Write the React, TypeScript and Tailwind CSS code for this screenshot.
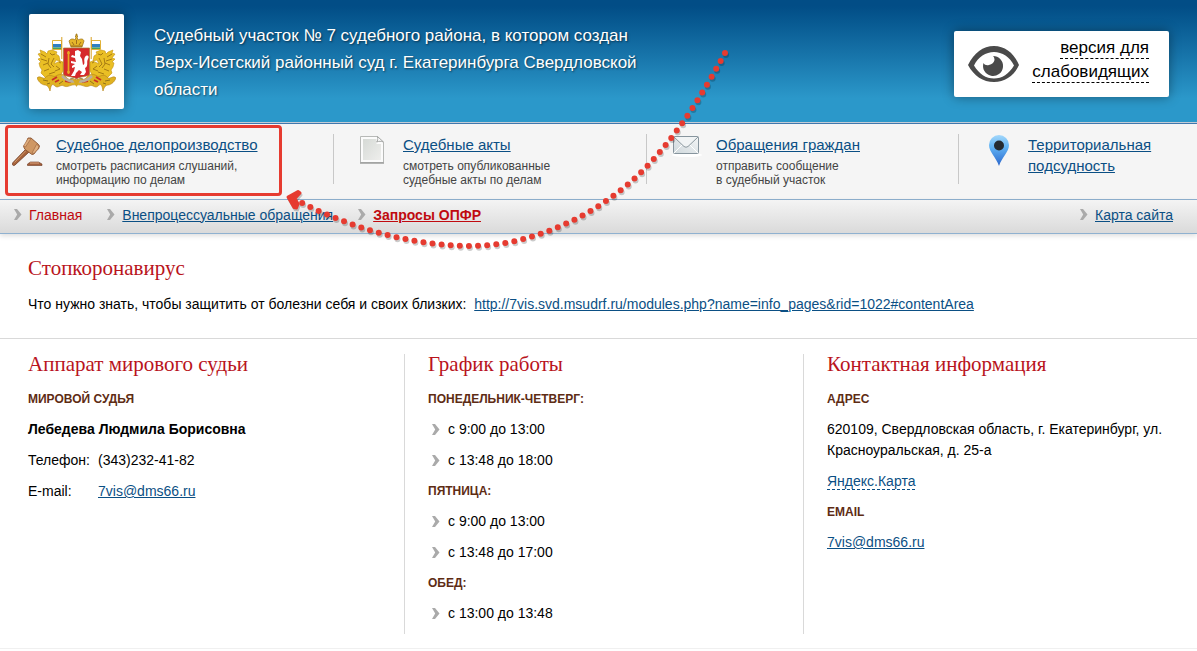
import React from "react";

const services = [
  {
    title: "Судебное делопроизводство",
    lines: ["смотреть расписания слушаний,", "информацию по делам"],
    icon: <GavelIcon />,
    cell: "pl-3",
  },
  {
    title: "Судебные акты",
    lines: ["смотреть опубликованные", "судебные акты по делам"],
    icon: <PaperIcon />,
    cell: "border-l border-[#c8c8c8] pl-[25px]",
  },
  {
    title: "Обращения граждан",
    lines: ["отправить сообщение", "в судебный участок"],
    icon: <MailIcon />,
    cell: "border-l border-[#c8c8c8] pl-[25px]",
  },
  {
    title: "Территориальная подсудность",
    lines: [],
    icon: <PinIcon />,
    cell: "border-l border-[#c8c8c8] pl-[25px]",
  },
];

const schedule = [
  { day: "Понедельник-четверг:", hours: ["с 9:00 до 13:00", "с 13:48 до 18:00"] },
  { day: "Пятница:", hours: ["с 9:00 до 13:00", "с 13:48 до 17:00"] },
  { day: "Обед:", hours: ["с 13:00 до 13:48"] },
];

function Chevron() {
  return (
    <svg className="shrink-0" width="8" height="12" viewBox="0 0 8 12" aria-hidden="true">
      <path d="M0 0h3l4.500 5.500L3 11H0l3.200-5.500z" fill="#aaa" />
    </svg>
  );
}

function GavelIcon() {
  return (
    <svg width="32" height="34" viewBox="0 -3 32 34" aria-hidden="true">
      <path d="M14 12l3 3L3 28c-2 1.500-3.500-.5-2-2.500z" fill="#a8643c" stroke="#6d3a22" strokeWidth=".8" />
      <path d="M14 13.500L2.500 25.500" stroke="#d09a6c" strokeWidth="1" />
      <path d="M16 1l3 0 7 6 1.500 2-1 3-2 1.500-2.500 3.500-2 .5-7-5-1.500-3 2.500-3z" fill="#cf9763" stroke="#8a5431" strokeWidth=".9" />
      <path d="M16 1.500l3 0-5.500 8.500-2-1zM24.500 7.500l2.500 1.500-1 3-4 4.500-2-.5z" fill="#dfae7e" stroke="#99603a" strokeWidth=".6" />
      <path d="M15.500 27l3-2h8l3.500 2v1.500H15.500z" fill="#a45f3b" stroke="#6d3a22" strokeWidth=".6" />
      <path d="M18 26h9" stroke="#dda982" />
    </svg>
  );
}

function PaperIcon() {
  return (
    <svg width="32" height="32" viewBox="3 0 32 32" aria-hidden="true">
      <defs>
        <linearGradient id="sheet" x1="0" y1="0" x2="1" y2="1">
          <stop offset="0" stopColor="#d6dad6" />
          <stop offset="1" stopColor="#eeeeec" />
        </linearGradient>
      </defs>
      <path d="M4.500 2.500h17l6 6V28.500h-23z" fill="#fbfbfb" stroke="#b7b9b7" />
      <path d="M7 5h13.500v5H25v16H7z" fill="url(#sheet)" />
      <path d="M21.500 2.500c.5 3 .3 4-.8 5.500 2-1 4.500-1 6.800 0z" fill="#fff" stroke="#a3a5a3" />
      <path d="M4 29h24" stroke="#9c9e9c" strokeWidth="1.500" />
    </svg>
  );
}

function MailIcon() {
  return (
    <svg width="32" height="24" viewBox="0 0 32 24" aria-hidden="true">
      <defs>
        <linearGradient id="mail" x1="0" y1="1" x2="1" y2="0">
          <stop offset="0" stopColor="#cfd8dc" />
          <stop offset="1" stopColor="#f4f6f7" />
        </linearGradient>
      </defs>
      <ellipse cx="15" cy="21" rx="15" ry="2" fill="#fff" />
      <rect x="1.500" y="2.500" width="25" height="17" rx="1" fill="url(#mail)" stroke="#87959e" />
      <path d="M2 19l8-8M26 19l-8-8" stroke="#fff" />
      <path d="M2 3l10 9.500q2 1.500 4 0L26 3" fill="#f1f4f5" stroke="#8b989f" />
    </svg>
  );
}

function PinIcon() {
  return (
    <svg width="32" height="34" viewBox="-1 -1 32 34" aria-hidden="true">
      <defs>
        <linearGradient id="pin" x1="0" y1="0" x2="0" y2="1">
          <stop offset="0" stopColor="#a4d8fb" />
          <stop offset=".4" stopColor="#5fb1f3" />
          <stop offset="1" stopColor="#2b66cc" />
        </linearGradient>
      </defs>
      <path d="M14 0a10 10 0 0 1 10 10c0 7-7 12-10 21C11 22 4 17 4 10A10 10 0 0 1 14 0z" fill="url(#pin)" />
      <circle cx="14" cy="10.500" r="5" fill="#242a30" />
    </svg>
  );
}

function EyeIcon() {
  return (
    <svg className="shrink-0" width="52" height="38" viewBox="0 0 52 38" aria-hidden="true">
      <path
        fillRule="evenodd"
        d="M0 20C6 8 15 1 26 1s20 7 25 19c-5 11-14 17-25 17S6 31 0 20zM6 20.500C11 29 18 33.500 26 33.500S41 29 46 20.500C42 12 34 7 26 7S10 12 6 20.500z"
        fill="#4a4a4a"
      />
      <path d="M25 11a10 10 0 1 1-9.500 7c1 2 3 2.500 5.500 2 3-.5 5-2.500 5.500-5 0-1.500-.5-3-1.500-4z" fill="#4a4a4a" />
    </svg>
  );
}

// One supporter with its flag, mirrored for the right side
function Griffin() {
  return (
    <g>
      <path d="M15.500 7.500h9v9h-9z" fill="#fff" stroke="#dca923" strokeWidth=".9" />
      <path d="M16 11h8v3.500h-8z" fill="#2f7fc4" />
      <path d="M16 14.500h8v1.500h-8z" fill="#4da257" />
      <path d="M24.800 4v22" stroke="#d8a020" strokeWidth="1" />
      <path
        d="M3 17l5 2 2 2 1-3 4-1 5 2-1 2 3 2 1 5-4-1-2 4 6-3 3 1v9l-3 5-6 3-8-1-5-5 1-3-2-3-1-4 2-1-3-3 3-1-3-4 3-1z"
        fill="#eabf25"
        stroke="#c4920f"
        strokeWidth=".6"
      />
      <path
        d="M4 21l5 3M4 26l6 2M6 32l5-2M13 20l2 2 3-1M12 25l-1 6 3 4M17 25l-3 6 3 3M7 38l5-2M19 33l4 3-5 2M12 41l6-2M22 29l2 1"
        stroke="#94690f"
        strokeWidth=".8"
        fill="none"
      />
      <path
        d="M0 45c3-3 5 1 8 0 5-6 8 0 11-2s7-3 10 1 7 2 10 2v6c-5-1-8 3-12 1s-6 3-9 0-4-1-5 5c-1-4-3-6-5-6s-6-2-8-7z"
        fill="#e0b221"
        stroke="#b3821a"
        strokeWidth=".6"
      />
      <path d="M15 47l5-3M18 49l4-2M28 48l6 1" stroke="#cb2f25" strokeWidth="1.900" />
      <path d="M6 47l5 1M22 51l4-3M33 46l4-1M10 51l3-1" stroke="#7d651b" strokeWidth=".8" />
    </g>
  );
}

function Emblem() {
  return (
    <svg width="79" height="58" viewBox="0 0 79 58" role="img" aria-label="Герб Свердловской области">
      <Griffin />
      <g transform="matrix(-1 0 0 1 79 0)">
        <Griffin />
      </g>
      <path d="M26.500 15h26v26c0 3-10 2-13 5-3-3-13-2-13-5z" fill="#d6292b" stroke="#a77b28" strokeWidth=".7" />
      <path d="M31.500 18v23M30 20h3M30 39h3" stroke="#e9a823" strokeWidth="1.700" />
      <path
        d="M38 18l3-1 3 2-1 4 2 3 1 6c3-1 0-5 2-8s5-1 3 2 1 7-3 9l1 4-2 3h-4l2-3-3-2-3 3-1 3h-4l3-5 1-4-3 1v-2l3-2-4-1v-2l5 1-1-4-4-1 1-2 3 1z"
        fill="#fff"
      />
      <path d="M34 14l-2-6c2-3 5-2 6-1l1-3-1-1h1V1h1v2h1l-1 1 1 3c2-1 5-2 6 1l-2 6z" fill="#e5b62b" stroke="#9a6d12" strokeWidth=".7" />
      <path d="M39.500 7v4M35 9l2 3M44 9l-2 3M34 13h11" stroke="#8b5c18" strokeWidth=".8" />
      <path d="M25 43q7 7 14.500 5Q48 50 55 43" fill="none" stroke="#baae9c" strokeWidth="2.500" />
      <path d="M36 47h7l-3.500 7z" fill="#d8a81f" />
    </svg>
  );
}

function SubTitle({ children }: { children: React.ReactNode }) {
  return <h3 className="mb-[9px] text-xs leading-[21px] font-bold text-[#5e2c14] uppercase">{children}</h3>;
}

function Title({ children }: { children: React.ReactNode }) {
  return <h2 className="font-['Liberation_Serif',serif] text-[21px] leading-5 text-[#b9141c]">{children}</h2>;
}

// Dotted pointer towards the first service
function Pointer() {
  const curve = "M725 53C701 97 672 144 635 178C593 217 530 246 471 246C412 246 352 228 302 203";
  const head = "M288 197L298 191.500L300 193L295 198.500L298 204L296.500 208L294 207.500z";
  return (
    <svg className="pointer-events-none absolute top-0 left-0" width="760" height="260" viewBox="0 0 760 260" fill="none" aria-hidden="true">
      <g transform="translate(1 2)" stroke="#00000033" strokeLinecap="round" strokeLinejoin="round">
        <path d={curve} strokeWidth="6" pathLength="56.020" strokeDasharray="0 1" />
        <path d={head} strokeWidth="3" />
      </g>
      <g stroke="#e63b30" strokeLinecap="round" strokeLinejoin="round">
        <path d={curve} strokeWidth="6" pathLength="56.020" strokeDasharray="0 1" />
        <path d={head} fill="#e63b30" strokeWidth="3" />
      </g>
    </svg>
  );
}

const link = "text-[#0b4f84] underline";

const App = () => {
  return (
    <div className="relative min-h-screen bg-white font-['Liberation_Sans',Arial,sans-serif] text-sm text-black">
      <header className="flex items-start justify-between border-b border-[#3f78ae] bg-linear-to-b from-[#024d86] from-5% to-[#2b98ca] to-80% pr-7 pb-3.5 pl-[29px] shadow-[inset_0_-1px_0_#c3ccd6]">
        <div className="flex items-start gap-[30px]">
          <a href="#" className="mt-3.5 flex size-[95px] items-center justify-center rounded-xs bg-white shadow-[0_0_12px_#0006]">
            <Emblem />
          </a>
          <h1 className="mt-[22px] w-[500px] text-[17px] leading-[27px] text-white [text-shadow:1px_1px_2px_#0008]">
            Судебный участок № 7 судебного района, в котором создан Верх-Исетский районный суд г. Екатеринбурга Свердловской области
          </h1>
        </div>
        <button className="mt-[31px] flex h-[66px] items-center gap-3 rounded-xs bg-white pr-5 pl-3.5 text-right text-[17px] shadow-[0_0_12px_#0006]">
          <EyeIcon />
          <span className="flex h-full flex-col items-end gap-[3px] pt-[7px] leading-5">
            <span className="border-b border-dashed border-black">версия для</span>
            <span className="border-b border-dashed border-black">слабовидящих</span>
          </span>
        </button>
      </header>

      <nav className="grid grid-cols-[333fr_313fr_312fr_239fr] border-b border-[#8fb1d0] bg-[#f5f5f5] pt-2.5 pb-[15px]">
        {services.map((s) => (
          <div key={s.title} className={`flex h-[50px] items-start gap-3 ${s.cell}`}>
            <div className="w-8 shrink-0">{s.icon}</div>
            <div>
              <a href="#" className={`block text-[15px] leading-[21px] ${link}`}>
                {s.title}
              </a>
              <p className="mt-1 text-xs leading-3.5 text-[#444]">
                {s.lines.map((line) => (
                  <span key={line} className="block">
                    {line}
                  </span>
                ))}
              </p>
            </div>
          </div>
        ))}
      </nav>

      <nav className="flex h-[34px] items-center border-b border-[#8fb1d0] bg-linear-to-b from-[#f4f4f4] to-[#dadada] pr-6 pb-1 pl-3.5 shadow-[0_2px_5px_#0002]">
        <a href="#" className="flex items-center gap-[7px] text-[#c00a0f]">
          <Chevron />
          Главная
        </a>
        <a href="#" className={`ml-[25px] flex items-center gap-[7px] ${link}`}>
          <Chevron />
          Внепроцессуальные обращения
        </a>
        <a href="#" className="ml-[25px] flex items-center gap-[7px] font-bold text-[#c00a0f] underline">
          <Chevron />
          Запросы ОПФР
        </a>
        <a href="#" className={`ml-auto flex items-center gap-[7px] ${link}`}>
          <Chevron />
          Карта сайта
        </a>
      </nav>

      <section className="border-b border-[#d9d9d9] px-7 pt-6 pb-[23px]">
        <Title>Стопкоронавирус</Title>
        <p className="mt-4 leading-[21px]">
          Что нужно знать, чтобы защитить от болезни себя и своих близких:&nbsp;{" "}
          <a href="#" className={link}>
            http://7vis.svd.msudrf.ru/modules.php?name=info_pages&amp;rid=1022#contentArea
          </a>
        </p>
      </section>

      <main className="grid grid-cols-[404fr_399fr_394fr] border-b border-[#f0f0f0] pt-[15px] pb-3.5 leading-[21px]">
        <section className="pl-7">
          <Title>Аппарат мирового судьи</Title>
          <div className="mt-[15px]">
            <SubTitle>Мировой судья</SubTitle>
            <p className="mb-2.5 font-bold">Лебедева Людмила Борисовна</p>
            <dl className="grid grid-cols-[70px_1fr] gap-y-2.5">
              <dt>Телефон:</dt>
              <dd>(343)232-41-82</dd>
              <dt>E-mail:</dt>
              <dd>
                <a href="#" className={link}>
                  7vis@dms66.ru
                </a>
              </dd>
            </dl>
          </div>
        </section>

        <section className="border-l border-[#d9d9d9] pl-[23px]">
          <Title>График работы</Title>
          <div className="mt-[15px]">
            {schedule.map((s) => (
              <div key={s.day}>
                <SubTitle>{s.day}</SubTitle>
                <ul className="pl-1">
                  {s.hours.map((h) => (
                    <li key={h} className="mb-2.5 flex items-center gap-2">
                      <Chevron />
                      {h}
                    </li>
                  ))}
                </ul>
              </div>
            ))}
          </div>
        </section>

        <section className="border-l border-[#d9d9d9] pr-7 pl-[23px]">
          <Title>Контактная информация</Title>
          <div className="mt-[15px]">
            <SubTitle>Адрес</SubTitle>
            <p className="mb-2.5">620109, Свердловская область, г. Екатеринбург, ул. Красноуральская, д. 25-а</p>
            <p className="mb-2.5">
              <a href="#" className="border-b border-dashed border-[#0b4f84] text-[#0b4f84]">
                Яндекс.Карта
              </a>
            </p>
            <SubTitle>Email</SubTitle>
            <a href="#" className={link}>
              7vis@dms66.ru
            </a>
          </div>
        </section>
      </main>

      <div className="pointer-events-none absolute top-[125px] left-[5px] h-[71px] w-[277px] rounded border-3 border-[#e63b30]"></div>
      <Pointer />
    </div>
  );
};

export default App;
